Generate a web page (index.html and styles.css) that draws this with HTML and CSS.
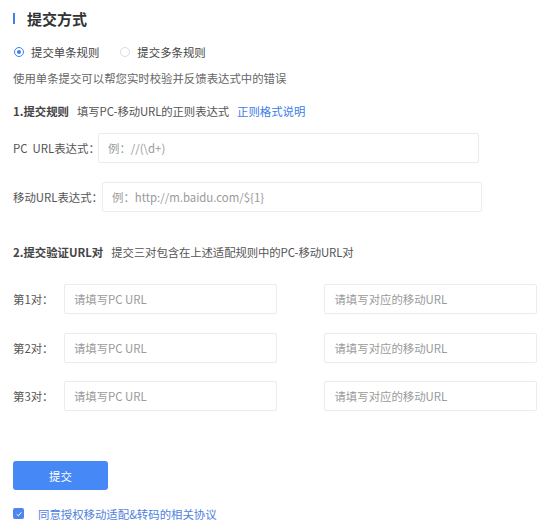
FILE: index.html
```html
<!DOCTYPE html>
<html lang="zh-CN">
<head>
<meta charset="utf-8">
<title>提交方式</title>
<link rel="stylesheet" href="styles.css">
</head>
<body>
<div class="page">
  <h1 class="title">提交方式</h1>

  <div class="radios">
    <label class="radio radio--on"><span class="radio__dot"></span>提交单条规则</label>
    <label class="radio"><span class="radio__dot"></span>提交多条规则</label>
  </div>

  <p class="desc">使用单条提交可以帮您实时校验并反馈表达式中的错误</p>

  <div class="section">
    <span class="section__title">1.提交规则</span>
    <span class="section__sub">填写PC-移动URL的正则表达式</span>
    <a class="section__link">正则格式说明</a>
  </div>

  <div class="field field--pc">
    <span class="field__label">PC&nbsp; URL表达式：</span>
    <div class="input input--pc">例：//(\d+)</div>
  </div>
  <div class="field field--m">
    <span class="field__label">移动URL表达式：</span>
    <div class="input input--m">例：http://m.baidu.com/${1}</div>
  </div>

  <div class="section section--2">
    <span class="section__title">2.提交验证URL对</span>
    <span class="section__sub">提交三对包含在上述适配规则中的PC-移动URL对</span>
  </div>

  <div class="pairs">
    <div class="pair">
      <span class="pair__label">第1对：</span>
      <div class="input input--a">请填写PC URL</div>
      <div class="input input--b">请填写对应的移动URL</div>
    </div>
    <div class="pair">
      <span class="pair__label">第2对：</span>
      <div class="input input--a">请填写PC URL</div>
      <div class="input input--b">请填写对应的移动URL</div>
    </div>
    <div class="pair">
      <span class="pair__label">第3对：</span>
      <div class="input input--a">请填写PC URL</div>
      <div class="input input--b">请填写对应的移动URL</div>
    </div>
  </div>

  <button class="submit">提交</button>

  <label class="agree">
    <span class="check"><svg viewBox="0 0 10 10" width="8" height="8"><path d="M2 5.2 L4.2 7.3 L8 2.8" fill="none" stroke="#fff" stroke-width="1.2"/></svg></span>
    <span class="agree__text">同意授权移动适配&amp;转码的相关协议</span>
  </label>
</div>
</body>
</html>
```

FILE: styles.css
```css
* { box-sizing: border-box; }
html, body { margin: 0; padding: 0; background: #fff; }
body {
  font-family: "Noto Sans CJK SC", "Noto Sans", sans-serif;
  font-size: 11.4px;
  color: #555;
}
.page { padding: 7px 13px 0; }

.title {
  margin: 0;
  display: flex;
  align-items: center;
  height: 23px;
  font-size: 15px;
  font-weight: 700;
  color: #333;
}
.title::before {
  content: "";
  width: 2px;
  height: 11px;
  background: #3d7ff0;
  margin-right: 12px;
}

.radios {
  margin-top: 12px;
  display: flex;
  height: 20px;
  align-items: center;
  gap: 20px;
}
.radio {
  display: flex;
  align-items: center;
  gap: 7px;
  color: #444;
}
.radio__dot {
  width: 10px;
  height: 10px;
  border-radius: 50%;
  border: 1px solid #ddd;
  display: flex;
  align-items: center;
  justify-content: center;
  margin-left: 1px;
}
.radio--on .radio__dot { border-color: #3d7ff0; }
.radio--on .radio__dot::after {
  content: "";
  width: 4px;
  height: 4px;
  border-radius: 50%;
  background: #3d7ff0;
}

.desc {
  margin: 6px 0 0;
  line-height: 20px;
  color: #666;
}

.section {
  margin-top: 13px;
  display: flex;
  align-items: center;
  height: 20px;
}
.section__title { font-weight: 700; color: #444; margin-right: 8px; }
.section__sub { color: #555; margin-right: 8px; letter-spacing: -0.1px; }
.section__link { color: #3b7de9; }
.section--2 { margin-top: 30px; }

.field {
  display: flex;
  align-items: center;
}
.field--pc { margin-top: 12px; }
.field--m { margin-top: 19px; }
.field__label { color: #555; white-space: nowrap; }
.field--pc .field__label { width: 85px; }
.field--m .field__label { width: 89px; }

.input {
  height: 30px;
  border: 1px solid #ececec;
  border-radius: 2px;
  box-shadow: 0 0 1px rgba(0,0,0,0.04);
  display: flex;
  align-items: center;
  padding-left: 9px;
  color: #9a9a9a;
  font-size: 11.4px;
  white-space: nowrap;
}
.input--pc { width: 381px; }
.input--m { width: 380px; }

.pairs {
  margin-top: 22px;
  display: flex;
  flex-direction: column;
  gap: 18.5px;
}
.pair {
  display: flex;
  align-items: center;
}
.pair__label { width: 51px; color: #555; }
.input--a { width: 214px; }
.input--b { width: 213px; margin-left: 47px; }

.submit {
  display: block;
  margin-top: 50px;
  width: 95px;
  height: 29px;
  border: 0;
  border-radius: 3px;
  background: #4688f5;
  color: #fff;
  font-family: inherit;
  font-size: 11.4px;
  padding: 0;
}

.agree {
  margin-top: 13.5px;
  display: flex;
  align-items: center;
  height: 20px;
}
.check {
  width: 11px;
  height: 11px;
  border-radius: 2px;
  background: #4d86ee;
  display: flex;
  align-items: center;
  justify-content: center;
  margin-right: 14px;
}
.agree__text { color: #4f7ee0; }
```
